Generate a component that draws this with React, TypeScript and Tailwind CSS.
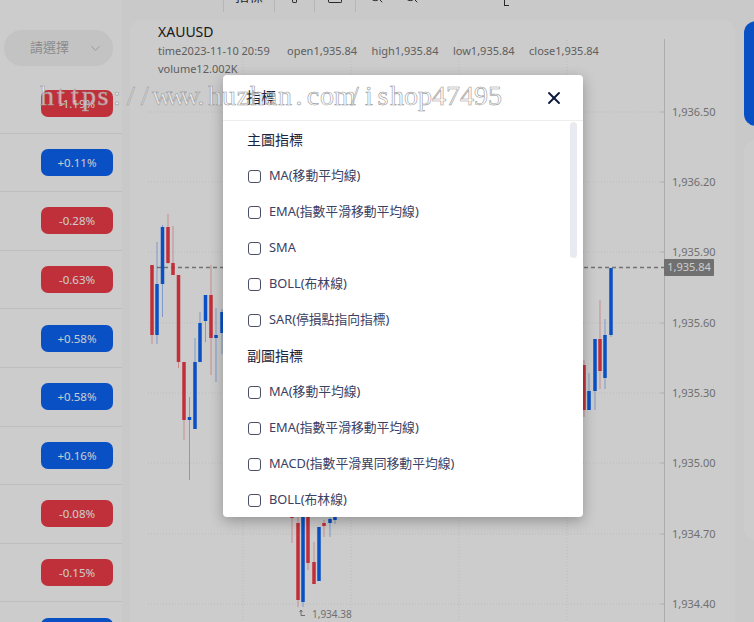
import { ChevronDown, X, Search } from "lucide-react";

const changes = ["-1.19%", "+0.11%", "-0.28%", "-0.63%", "+0.58%", "+0.58%", "+0.16%", "-0.08%", "-0.15%", ""];

const mainList = ["MA(移動平均線)", "EMA(指數平滑移動平均線)", "SMA", "BOLL(布林線)", "SAR(停損點指向指標)"];
const subList = ["MA(移動平均線)", "EMA(指數平滑移動平均線)", "MACD(指數平滑異同移動平均線)", "BOLL(布林線)"];

const gridY = [112, 182, 252, 323, 393, 463, 534, 604];
const gridX = [243, 351, 459, 567];
const prices = ["1,936.50", "1,936.20", "1,935.90", "1,935.60", "1,935.30", "1,935.00", "1,934.70", "1,934.40"];
const priceTops = [84, 154, 224, 295, 365, 435, 506, 576];

const watermark = "https://www.huzhan.com/ishop47495".split("");

const RED = "#f23d49";
const BLUE = "#0a64f5";

// x, wick top, wick bottom, body top, body bottom, up?
const candles: [number, number, number, number, number, boolean][] = [
  [152, 265, 344, 265, 335, false],
  [157, 242, 344, 284, 335, true],
  [162.5, 225, 317, 227, 284, true],
  [168, 214, 264, 227, 263, false],
  [173, 226, 275, 263, 275, false],
  [178.5, 275, 368, 275, 362, false],
  [184, 362, 440, 362, 420, false],
  [189.5, 397, 480, 417, 420, true],
  [195, 338, 429, 362, 429, true],
  [200, 312, 362, 323, 362, true],
  [205.5, 295, 342, 295, 321, true],
  [211, 265, 375, 295, 338, false],
  [216, 308, 382, 335, 338, true],
  [222, 309, 354, 312, 333, true],
  [292, 500, 543, 500, 518, false],
  [298, 500, 607, 523, 600, false],
  [303, 500, 607, 500, 602, true],
  [308, 500, 570, 500, 563, false],
  [314, 542, 584, 562, 584, false],
  [319, 527, 581, 527, 581, true],
  [324, 520, 537, 523, 526, false],
  [330, 510, 537, 519, 523, true],
  [335, 510, 524, 510, 520, true],
  [584, 360, 417, 365, 410, false],
  [589, 373, 410, 391, 410, true],
  [595, 339, 410, 339, 391, true],
  [600, 300, 389, 339, 371, false],
  [605, 319, 389, 335, 378, true],
  [611, 268, 337, 268, 335, true],
];

function Chart() {
  return (
    <svg width="605" height="602" viewBox="130 20 605 602" className="block">
      {gridY.map((y) => (
        <line key={y} x1="148" x2="660" y1={y} y2={y} stroke="#ececec" strokeDasharray="1 2" />
      ))}
      {gridX.map((x) => (
        <line key={x} x1={x} x2={x} y1="40" y2="622" stroke="#ececec" strokeDasharray="1 2" />
      ))}
      {gridY.map((y) => (
        <line key={y} x1="660" x2="664" y1={y} y2={y} stroke="#dddddd" />
      ))}
      <line x1="150" x2="664" y1="267.5" y2="267.5" stroke="#8f8f8f" strokeWidth="1.3" strokeDasharray="4 3" />
      <line x1="664.5" x2="664.5" y1="39" y2="622" stroke="#d8d8d8" />
      {candles.map(([x, wt, wb, bt, bb, up]) => (
        <g key={x}>
          <line x1={x} x2={x} y1={wt} y2={wb} stroke={up ? BLUE : RED} strokeOpacity="0.4" />
          <rect x={x - 1.75} y={bt} width="3.5" height={bb - bt} fill={up ? BLUE : RED} />
        </g>
      ))}
      <path d="M301 610v5.5h4M299.5 612l1.5-2 1.5 2" fill="none" stroke="#888" strokeWidth="1" />
    </svg>
  );
}

function Indicator({ label }: { label: string }) {
  return (
    <label className="flex h-9 items-center gap-2 pl-[25px] text-[12.8px] text-[#3b4163]">
      <span className="h-[13px] w-[13px] rounded-[3px] border-[1.5px] border-[#4b5068]" />
      {label}
    </label>
  );
}

export default function App() {
  return (
    <div
      className="relative flex h-[622px] w-[754px] overflow-hidden bg-[#fcfcfc]"
      style={{ fontFamily: '"Noto Sans", "Noto Sans CJK TC", sans-serif' }}
    >
      <aside className="flex w-[122px] shrink-0 flex-col bg-white">
        <div className="flex h-[75px] shrink-0 items-start pl-1 pt-[30px]">
          <div className="flex h-9 w-[109px] items-center justify-between rounded-full bg-[#f4f4f4] pl-[26px] pr-[10px] text-[13px] text-[#b0b0b0]">
            請選擇
            <ChevronDown size={15} strokeWidth={1.25} />
          </div>
        </div>
        {changes.map((c, i) => (
          <div
            key={i}
            className="flex h-[58.6px] shrink-0 items-center justify-end border-b border-[#eeeeee] pr-[9px]"
          >
            <span
              className={`flex h-[27px] w-[72px] items-center justify-center rounded-[7px] text-[11.5px] text-white ${
                c.startsWith("-") ? "bg-[#f03d49]" : "bg-[#0a64f5]"
              }`}
            >
              {c}
            </span>
          </div>
        ))}
      </aside>

      <main className="ml-2 flex w-[605px] shrink-0 flex-col">
        <div className="flex h-3 shrink-0 items-start pl-[93px] text-[#333]">
          <div className="flex h-3 w-[51px] justify-center border-l border-[#e4e4e4]">
            <div className="h-[3px] overflow-hidden text-sm leading-4">
              <div className="-mt-[12px]">指標</div>
            </div>
          </div>
          <div className="flex h-3 w-10 justify-center border-l border-[#e4e4e4]">
            <span className="h-[3px] w-[5px] rounded-b-[2px] border border-t-0 border-[#333]" />
          </div>
          <div className="flex h-3 w-[41px] justify-center border-l border-[#e4e4e4]">
            <span className="h-[3px] w-[14px] rounded-b-[2px] border border-t-0 border-[#333]" />
          </div>
          <div className="flex h-3 border-l border-[#e4e4e4] pl-[12px]">
            <div className="flex h-1 gap-[19px] overflow-hidden">
              <Search size={16} className="-mt-3 shrink-0" strokeWidth={1.5} />
              <Search size={16} className="-mt-3 shrink-0" strokeWidth={1.5} />
            </div>
          </div>
          <span className="ml-[85px] h-[6px] w-[5px] border-b border-l border-[#333]" />
        </div>
        <section className="relative mt-2 h-[602px] overflow-hidden rounded-t-xl bg-white">
          <Chart />
          <div className="absolute left-[28px] top-[2px]">
            <div className="text-sm leading-[20px] text-[#222]">XAUUSD</div>
            <div className="flex gap-[14.5px] text-[11px] leading-[18px] text-[#777]">
              <span className="w-[114.5px]">time2023-11-10 20:59</span>
              <span>open1,935.84</span>
              <span>high1,935.84</span>
              <span>low1,935.84</span>
              <span>close1,935.84</span>
            </div>
            <div className="text-[11px] leading-[18px] text-[#777]">volume12.002K</div>
          </div>
          {prices.map((p, i) => (
            <span
              key={p}
              className="absolute left-[542px] text-[11px] leading-4 text-[#8c8c8c]"
              style={{ top: priceTops[i] }}
            >
              {p}
            </span>
          ))}
          <span className="absolute left-[534px] top-[239px] flex h-[17px] w-[50px] items-center justify-center rounded-[1px] bg-[#8c8c8c] text-[11px] text-white">
            1,935.84
          </span>
          <span className="absolute left-[182px] top-[586px] text-[10px] leading-4 text-[#8c8c8c]">1,934.38</span>
        </section>
      </main>

      <aside className="ml-[9px] flex min-w-0 flex-1 flex-col gap-[14px] pt-[21px]">
        <div className="h-[105px] w-[20px] shrink-0 rounded-l-xl bg-[#0a64f5]" />
        <div className="h-[400px] w-[20px] rounded-l-xl bg-white" />
      </aside>

      {/* dimmed layer */}
      <div className="absolute inset-0 bg-black/20" />

      <div className="absolute left-[223px] top-[75px] flex h-[442px] w-[360px] flex-col overflow-hidden rounded-[4px] bg-white shadow-[0_4px_14px_rgba(0,0,0,0.28)]">
        <div className="flex h-[46px] shrink-0 items-center justify-between border-b border-[#eeeeee] pl-[23px] pr-[19px]">
          <span className="text-[15px] text-[#1a2340]">指標</span>
          <X size={20} strokeWidth={2.25} className="text-[#0e1a3d]" />
        </div>
        <div className="relative flex-1 overflow-hidden pt-[1px]">
          <div className="flex h-9 items-center pl-[24px] text-sm text-[#1a2340]">主圖指標</div>
          {mainList.map((l) => (
            <Indicator key={l} label={l} />
          ))}
          <div className="flex h-9 items-center pl-[24px] text-sm text-[#1a2340]">副圖指標</div>
          {subList.map((l) => (
            <Indicator key={l} label={l} />
          ))}
          <div className="absolute right-[6px] top-[1px] h-[136px] w-[7px] rounded-full bg-[#e9eaef]" />
        </div>
      </div>

      {/* site watermark */}
      <div className="pointer-events-none absolute left-[40px] top-[78px] flex text-[28px] leading-9 text-white/60 [-webkit-text-stroke:0.6px_#9a9a9a] [font-family:'Liberation_Serif',serif]">
        {watermark.map((ch, i) => (
          <span key={i} className="w-[14px] shrink-0 text-center">
            {ch}
          </span>
        ))}
      </div>
    </div>
  );
}
